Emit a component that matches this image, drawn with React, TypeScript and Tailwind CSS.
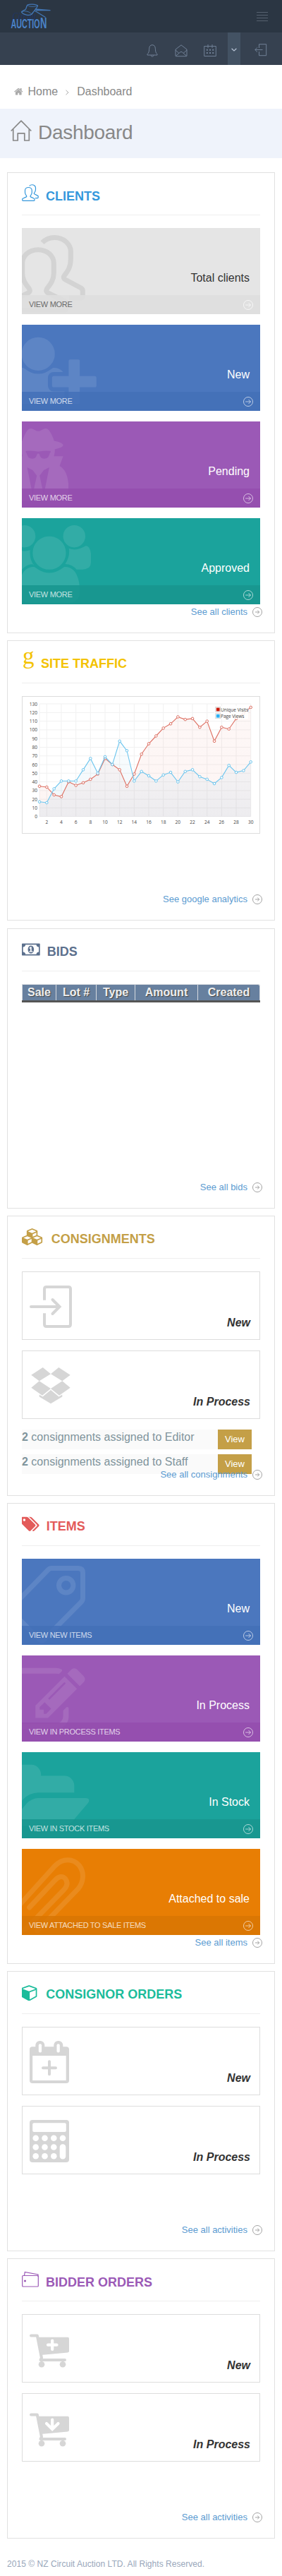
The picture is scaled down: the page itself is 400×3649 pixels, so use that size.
import type { ReactNode } from "react";

const P = {
  tags: "M384 448q0-53-37.5-90.5t-90.5-37.5-90.5 37.5-37.5 90.5 37.5 90.5 90.5 37.5 90.5-37.5 37.5-90.5zm1067 576q0 53-37 90l-491 492q-39 37-91 37-53 0-90-37l-715-716q-38-37-64.5-101t-26.5-117v-416q0-52 38-90t90-38h416q53 0 117 26.5t102 64.5l715 714q37 39 37 91zm384 0q0 53-37 90l-491 492q-39 37-91 37-36 0-59-14t-53-45l470-470q37-37 37-90 0-52-37-91l-715-714q-38-38-102-64.5t-117-26.5h224q53 0 117 26.5t102 64.5l715 714q37 39 37 91z",
  cube: "M832 1663l640-349v-636l-640 233v752zm-64-865l698-254-698-254-698 254zm832-252v768q0 35-18 65t-49 47l-704 384q-28 16-61 16t-61-16l-704-384q-31-17-49-47t-18-65v-768q0-40 23-73t61-47l704-256q22-8 44-8t44 8l704 256q38 14 61 47t23 73z",
  cubes: "M640 1632l384-192v-314l-384 164v342zm-64-454l404-173-404-173-404 173zm1088 454l384-192v-314l-384 164v342zm-64-454l404-173-404-173-404 173zm-448-293l384-165v-266l-384 164v267zm-64-379l441-189-441-189-441 189zm1088 518v416q0 36-19 67t-52 47l-448 224q-25 14-57 14t-57-14l-448-224q-4-2-7-4-2 2-7 4l-448 224q-25 14-57 14t-57-14l-448-224q-33-16-52-47t-19-67v-416q0-38 21.5-70t56.5-48l434-186v-400q0-38 21.5-70t56.5-48l448-192q23-10 50-10t50 10l448 192q35 16 56.5 48t21.5 70v400l434 186q36 16 57 48t21 70z",
  money: "M768 1152h384v-96h-128v-448h-114l-148 137 77 80q42-37 55-57h2v288h-128v96zm512-256q0 70-21 142t-59.5 134-101.5 101-138 39-138-39-101.5-101-59.5-134-21-142 21-142 59.5-134 101.5-101 138-39 138 39 101.5 101 59.5 134 21 142zm512 256v-512q-106 0-181-75t-75-181h-1152q0 106-75 181t-181 75v512q106 0 181 75t75 181h1152q0-106 75-181t181-75zm128-832v1152q0 26-19 45t-45 19h-1792q-26 0-45-19t-19-45v-1152q0-26 19-45t45-19h1792q26 0 45 19t19 45z",
  home: "M1408 992v480q0 26-19 45t-45 19h-384v-384h-256v384h-384q-26 0-45-19t-19-45v-480q0-1 .5-3t.5-3l575-474 575 474q1 2 1 6zm223-69l-62 74q-8 9-21 11h-3q-13 0-21-7l-692-577-692 577q-12 8-24 7-13-2-21-11l-62-74q-8-10-7-23.5t11-21.5l719-599q32-26 76-26t76 26l244 204v-195q0-14 9-23t23-9h192q14 0 23 9t9 23v408l219 182q10 8 11 21.5t-7 23.5z",
  userPlus: "M704 896q-159 0-271.5-112.5t-112.5-271.5 112.5-271.5 271.5-112.5 271.5 112.5 112.5 271.5-112.5 271.5-271.5 112.5zm960 128h352q13 0 22.5 9.5t9.5 22.5v192q0 13-9.5 22.5t-22.5 9.5h-352v352q0 13-9.5 22.5t-22.5 9.5h-192q-13 0-22.5-9.5t-9.5-22.5v-352h-352q-13 0-22.5-9.5t-9.5-22.5v-192q0-13 9.5-22.5t22.5-9.5h352v-352q0-13 9.5-22.5t22.5-9.5h192q13 0 22.5 9.5t9.5 22.5v352zm-736 224q0 52 38 90t90 38h256v238q-68 50-171 50h-874q-121 0-194-69t-73-190q0-53 3.5-103.5t14-109 26.5-108.5 43-97.5 62-81 85.5-53.5 111.5-20q19 0 39 17 79 61 154.5 91.5t164.5 30.5 164.5-30.5 154.5-91.5q20-17 39-17 132 0 217 96h-223q-52 0-90 38t-38 90v192z",
  group: "M593 896q-162 5-265 128h-134q-82 0-138-40.5t-56-118.5q0-353 124-353 6 0 43.5 21t97.5 42.5 119 21.5q67 0 133-23-5 37-5 66 0 159 93 293zm1071 637q0 120-73 189.5t-194 69.5h-874q-121 0-194-69.5t-73-189.5q0-53 3.5-103.5t14-109 26.5-108.5 43-97.5 62-81 85.5-53.5 111.5-20q10 0 43 21.5t73 48 107 48 135 21.5 135-21.5 107-48 73-48 43-21.5q61 0 111.5 20t85.5 53.5 62 81 43 97.5 26.5 108.5 14 109 3.5 103.5zm-1024-1277q0 106-75 181t-181 75-181-75-75-181 75-181 181-75 181 75 75 181zm704 384q0 159-112.5 271.5t-271.5 112.5-271.5-112.5-112.5-271.5 112.5-271.5 271.5-112.5 271.5 112.5 112.5 271.5zm576 225q0 78-56 118.5t-138 40.5h-134q-103-123-265-128 93-134 93-293 0-29-5-66 66 23 133 23 59 0 119-21.5t97.5-42.5 43.5-21q124 0 124 353zm-128-609q0 106-75 181t-181 75-181-75-75-181 75-181 181-75 181 75 75 181z",
  folder: "M1879 952q0 31-31 66l-336 396q-43 51-120.5 86.5t-143.5 35.5h-1088q-34 0-60.5-13t-26.5-43q0-31 31-66l336-396q43-51 120.5-86.5t143.5-35.5h1088q34 0 60.5 13t26.5 43zm-343-344v160h-832q-94 0-197 47.5t-164 119.5l-337 396-5 6q0-4-.5-12.5t-.5-12.5v-960q0-92 66-158t158-66h320q92 0 158 66t66 158v32h544q92 0 158 66t66 158z",
  edit: "M888 1184l116-116-152-152-116 116v56h96v96h56zm440-720q-16-16-33 1l-350 350q-17 17-1 33t33-1l350-350q17-17 1-33zm80 594v190q0 119-84.5 203.5t-203.5 84.5h-832q-119 0-203.5-84.5t-84.5-203.5v-832q0-119 84.5-203.5t203.5-84.5h832q63 0 117 25 15 7 18 23 3 17-9 29l-49 49q-14 14-32 8-23-6-45-6h-832q-66 0-113 47t-47 113v832q0 66 47 113t113 47h832q66 0 113-47t47-113v-126q0-13 9-22l64-64q15-15 35-7t20 29zm-96-738l288 288-672 672h-288v-288zm444 132l-92 92-288-288 92-92q28-28 68-28t68 28l152 152q28 28 28 68t-28 68z",
  secret: "M576 1536l96-448-96-128-128-64zm256 0l128-640-128 64-96 128zm160-1010q-2-4-4-6-10-8-96-8-70 0-167 19-7 2-21 2t-21-2q-97-19-167-19-86 0-96 8-2 2-4 6 2 18 4 27 2 3 7.5 6.5t7.5 10.5q2 4 7.5 20.5t7 20.5 7.5 17 8.5 17 9 14 12 13.5 14 9.5 17.5 8 20.5 4 24.5 2q36 0 59-12.5t32.5-30 14.5-34.5 11.5-29.5 17.5-12.5h12q11 0 17.5 12.5t11.5 29.5 14.5 34.5 32.5 30 59 12.5q13 0 24.5-2t20.5-4 17.5-8 14-9.5 12-13.5 9-14 8.5-17 7.5-17 7-20.5 7.5-20.5q2-7 7.5-10.5t7.5-6.5q2-9 4-27zm416 879q0 121-73 190t-194 69h-874q-121 0-194-69t-73-190q0-61 4.5-118t19-125.5 37.5-123.5 63.5-103.5 93.5-74.5l-90-220h214q-22-64-22-128 0-12 2-32-194-40-194-96 0-57 210-99 17-62 51.5-134t70.5-114q32-37 76-37 30 0 84 31t84 31 84-31 84-31q44 0 76 37 36 42 70.5 114t51.5 134q210 42 210 99 0 56-194 96 7 81-20 160h214l-82 225q63 33 107.5 96.5t65.5 143.5 29 151.5 8 148.5z",
};

/* Solid glyph on a 1792-unit em square */
function Glyph({ d, w, size }: { d: string; w: number; size: number }) {
  return (
    <svg width={(w / 1792) * size} height={size} viewBox={`0 0 ${w} 1792`} fill="currentColor" className="block shrink-0">
      <path d={d} />
    </svg>
  );
}

function UsersIcon({ size, sw = 7 }: { size: number; sw?: number }) {
  return (
    <svg width={size} height={size} viewBox="0 0 110 110" fill="none" stroke="currentColor" strokeWidth={sw} className="block shrink-0">
      <path d="M43 20.7C56 20.7 65.3 29.5 65.3 40V54C65.3 64 60 70 55.5 76Q53.5 79.5 57 82L80 93Q82.5 94.5 82.5 97V103Q82.5 107 79 107H7Q3.5 107 3.5 103V97Q3.5 94.5 6 93L29 82Q32.5 79.5 30.5 76C26 70 20.7 64 20.7 54V40C20.7 29.5 30 20.7 43 20.7Z" />
      <path d="M49 10.7C53.5 6 59 3.5 66.3 3.5C79 3.5 89.3 12.5 89.3 23V34C89.3 46 84.5 52 80.5 57Q77.5 60.5 81.5 63L104 75Q106.3 76.5 106.3 79V85Q106.3 89.5 102 89.5H87" />
    </svg>
  );
}

function TagIcon() {
  return (
    <svg width="110" height="110" viewBox="0 0 110 110" fill="none" stroke="currentColor" strokeWidth="7">
      <path d="M62 3.5H100Q106.5 3.5 106.5 10V46Q106.5 49 104 51.5L51 105Q48.3 107.500 45.500 105L5 64.500Q2.500 62 5 59.500L57 6Q59 3.500 62 3.500Z" />
      <circle cx="82.700" cy="27.700" r="10.200" />
    </svg>
  );
}

function ClipIcon() {
  return (
    <svg width="110" height="110" viewBox="0 0 110 110" fill="none" stroke="currentColor" strokeWidth="7" strokeLinecap="round">
      <path d="M30.700 73L67 34.500C72 28.500 78 28 81.500 32C85.500 37 84.500 42.500 80 47.500L27 102C18 110 4 106 3.500 92Q3.500 84 9 78L67 14C78 2.500 93 3.500 101 13C109 23 108 37 99.500 47L42 106" />
    </svg>
  );
}

function ArrowCircle() {
  return (
    <svg width="14" height="14" viewBox="0 0 14 14" fill="none" stroke="currentColor" className="block shrink-0">
      <circle cx="7" cy="7" r="6.500" strokeWidth=".9" />
      <path d="M3.200 7H10.500M7.500 4L10.500 7L7.500 10" strokeWidth=".9" />
    </svg>
  );
}

function LinkCircle() {
  return (
    <svg width="14" height="14" viewBox="0 0 14 14" fill="none" stroke="#999" className="block shrink-0">
      <circle cx="7" cy="7" r="6.500" strokeWidth=".9" />
      <path d="M4 7H9.700M7.200 4.500L9.700 7L7.200 9.500" strokeWidth=".9" />
    </svg>
  );
}

function Panel({ icon, title, color, titleCls, link, tall, last, children }: {
  icon: ReactNode; title: string; color: string; titleCls: string; link: string; tall?: boolean; last?: string; children: ReactNode;
}) {
  return (
    <section className={`relative border border-[#e1e1e1] bg-white px-5 ${tall ? "h-[653px]" : "h-[397px]"} ${last ?? "mb-[10px]"}`}>
      <header className={`flex h-[60px] items-start border-b border-[#eee] ${color}`}>
        {icon}
        <h2 className={`text-[18px] leading-5 font-bold whitespace-nowrap ${titleCls}`}>{title}</h2>
      </header>
      <div className="pt-[18px]">{children}</div>
      <a className="absolute right-[17px] bottom-[21px] flex items-center gap-[7px] text-[13px] leading-4 text-[#5b9bd1]">
        {link}
        <LinkCircle />
      </a>
    </section>
  );
}

function Tile({ bg, strip, label, more, icon, light }: {
  bg: string; strip: string; label: string; more: string; icon: ReactNode; light?: boolean;
}) {
  return (
    <div className={`relative flex h-[122px] flex-col overflow-hidden ${bg}`}>
      <div className={`absolute top-[9.600px] left-[-20px] ${light ? "text-black/8" : "text-white/10"}`}>{icon}</div>
      <div className={`relative h-[95px] pt-[62px] pr-[15px] text-right text-[16px] leading-[18px] ${light ? "text-[#333]" : "text-white"}`}>{label}</div>
      <div className={`relative flex h-[27px] items-center justify-between px-[10px] text-[11px] tracking-[-0.300px] ${strip} ${light ? "text-[#6a6a6a]" : "text-white/75"}`}>
        <span className="leading-[14px] pb-px">{more}</span>
        <span className={light ? "text-white/80" : "text-white/70"}><ArrowCircle /></span>
      </div>
    </div>
  );
}

function Card({ icon, label }: { icon: ReactNode; label: string }) {
  return (
    <div className="flex h-[97px] justify-between border border-[#ddd] pl-[10px] pr-[13px]">
      <svg width="60" height="60" viewBox="0 0 60 60" className="mt-[18.700px] text-[#d6d6d6]">{icon}</svg>
      <div className="pt-[63px] text-[16px] leading-[18px] font-bold italic text-[#333]">{label}</div>
    </div>
  );
}

const loginIcon = (
  <g fill="none" stroke="currentColor" strokeWidth="4" >
    <path d="M21 20.700V5Q21 2 24 2H55Q58 2 58 5V55Q58 58 55 58H24Q21 58 21 55V39.300" />
    <path d="M2 30H42M32.500 20L42.500 30L32.500 40" strokeLinecap="round" />
  </g>
);
const dropIcon = (
  <g fill="currentColor">
    <path d="M2.300 14.700L18.700 4L30 13.300L13.700 23.300ZM57.700 14.700L41.300 4L30 13.300L46.300 23.300ZM13.700 23.300L30 34L18 43.700L2.300 32.700ZM46.300 23.300L30 34L42 43.700L57.700 32.700Z" />
    <path d="M30 36L41.500 45.500L46.300 42.500V45.600L30 55.300L13.700 45.600V42.500L18.500 45.500Z" />
  </g>
);
const calPlusIcon = (
  <g>
    <rect y="8.300" width="56" height="51.700" rx="4" fill="currentColor" />
    <rect x="4.200" y="21" width="47.500" height="35" fill="#fff" />
    <rect x="8.300" width="13" height="19" rx="6" fill="currentColor" />
    <rect x="34.300" width="13" height="19" rx="6" fill="currentColor" />
    <rect x="12.800" y="4.300" width="4.300" height="12.300" rx="2" fill="#fff" />
    <rect x="38.500" y="4.300" width="4.300" height="12.300" rx="2" fill="#fff" />
    <path d="M19 38.300H37M28 29.300V47.300" stroke="currentColor" strokeWidth="4" strokeLinecap="round" />
  </g>
);
const calcIcon = (
  <g fill="#fff">
    <rect width="56" height="60" rx="4" fill="#d6d6d6" />
    <rect x="4.200" y="4.300" width="47.600" height="12.700" rx="2" />
    {[25.700, 38.500, 51.300].map((y) => [8.700, 21.500, 34.300].map((x) => <circle key={`${x}-${y}`} cx={x} cy={y} r="4.300" />))}
    <circle cx="47" cy="25.700" r="4.300" />
    <rect x="42.700" y="34.200" width="8.600" height="21.400" rx="4.200" />
  </g>
);
const cartBase = (
  <>
    <path d="M2 10.500H10.800L17 42L15.500 45H50" fill="none" stroke="currentColor" strokeWidth="4" strokeLinecap="round" strokeLinejoin="round" />
    <path d="M10 12.700H54Q56 12.700 56 15V32.500Q56 34 54 34.500L16 38Z" fill="currentColor" />
    <circle cx="17" cy="51.300" r="4.300" fill="currentColor" />
    <circle cx="47" cy="51.300" r="4.300" fill="currentColor" />
  </>
);
const cartPlusIcon = (
  <g>
    {cartBase}
    <path d="M26 23.700H38.500M32.200 17.500V30" stroke="#fff" strokeWidth="4.200" strokeLinecap="round" />
  </g>
);
const cartDownIcon = (
  <g>
    {cartBase}
    <path d="M32.200 17.500V31M24 23L32.200 31L40.500 23" fill="none" stroke="#fff" strokeWidth="4.200" strokeLinecap="round" />
  </g>
);

const red = [35, 34, 25, 23, 40, 36, 39, 43, 49, 67, 60, 54, 35, 49, 72, 84, 93, 102, 107, 115, 112, 113, 103, 110, 87, 103, 101, 113, 119, 126];
const blue = [17, 16, 32, 41, 41, 41, 54, 67, 50, 69, 60, 87, 76, 41, 52, 47, 41, 48, 51, 40, 52, 54, 46, 43, 38, 45, 59, 51, 53, 63];
const px = (i: number) => 25 + i * 10.335;
const py = (v: number) => 170.700 - v * 1.2282;

function Chart() {
  const line = (d: number[]) => d.map((v, i) => `${px(i).toFixed(1)},${py(v).toFixed(1)}`).join(" ");
  const area = (d: number[]) => `25,170.700 ${line(d)} 324.700,170.700`;
  const series = (d: number[], c: string) => (
    <g>
      <polyline points={line(d)} fill="none" stroke={c} strokeWidth="1.100" />
      {d.map((v, i) => <circle key={i} cx={px(i)} cy={py(v)} r="1.800" fill="#fff" stroke={c} strokeWidth="1" />)}
    </g>
  );
  return (
    <div className="h-[195px] border border-[#ddd]">
      <svg width="338" height="195" viewBox="0 0 338 195" className="-mt-px -ml-px block max-w-none font-['Open_Sans',sans-serif]" fontSize="6.600" fill="#444">
        <defs>
          <linearGradient id="redFill" x1="0" y1="0" x2="0" y2="1">
            <stop offset="0" stopColor="#e26a5a" stopOpacity=".05" />
            <stop offset="1" stopColor="#e26a5a" stopOpacity=".07" />
          </linearGradient>
          <linearGradient id="blueFill" x1="0" y1="0" x2="0" y2="1">
            <stop offset="0" stopColor="#5cb8e6" stopOpacity=".03" />
            <stop offset="1" stopColor="#5c9ec6" stopOpacity=".1" />
          </linearGradient>
        </defs>
        <g stroke="#f1f1f1" strokeWidth="1">
          {Array.from({ length: 14 }, (_, i) => <path key={i} d={`M25 ${py(i * 10)}H324.700`} />)}
          {Array.from({ length: 15 }, (_, i) => <path key={i} d={`M${px(i * 2 + 1)} 11V170.700`} />)}
          <path d="M25 11V170.700" />
        </g>
        <polygon points={area(red)} fill="url(#redFill)" />
        <polygon points={area(blue)} fill="url(#blueFill)" />
        {series(red, "#dd6f62")}
        {series(blue, "#6cc5ee")}
        {Array.from({ length: 14 }, (_, i) => <text key={i} x="22" y={py(i * 10) + 2.500} textAnchor="end">{i * 10}</text>)}
        {Array.from({ length: 15 }, (_, i) => <text key={i} x={px(i * 2 + 1)} y="180.500" textAnchor="middle">{i * 2 + 2}</text>)}
        <rect x="273" y="14" width="48" height="18.500" fill="#fff" fillOpacity=".85" />
        <rect x="274.700" y="15.500" width="7" height="7" fill="#fff" stroke="#ccc" strokeWidth=".7" />
        <rect x="275.800" y="16.600" width="4.800" height="4.800" fill="#cb1b0c" />
        <rect x="274.700" y="24.700" width="7" height="7" fill="#fff" stroke="#ccc" strokeWidth=".7" />
        <rect x="275.800" y="25.800" width="4.800" height="4.800" fill="#2cb0f2" />
        <text x="282" y="21.700" textLength="39.300">Unique Visits</text>
        <text x="282" y="30.900" textLength="33.500">Page Views</text>
      </svg>
    </div>
  );
}

function Logo() {
  return (
    <svg width="60" height="41" viewBox="0 0 60 41" className="block overflow-visible" fontFamily="Liberation Sans Narrow, Liberation Sans, sans-serif">
      <text x="2.500" y="22.500" fontFamily="Liberation Serif, serif" fontStyle="italic" fontSize="14" fill="#1f3566" textLength="34" lengthAdjust="spacingAndGlyphs">Circuit</text>
      <g fill="none" stroke="#4377b5" strokeWidth="1.300" strokeLinejoin="round">
        <path d="M24 2C27 .5 36 1 38.500 3C38 6 35 7.500 34.500 9.500C32 12 31 14 29.500 15.500C26 17.500 17 15.500 15.500 12C17 10 20 9.500 21.500 8C22.500 6 22.500 4 24 2Z" />
        <path d="M16 12C19 9.500 27 11 29.500 15M24 2C26 5 34 5 38.500 3" strokeWidth=".9" />
        <path d="M35 8L56 9.700L36 9.500M34 10L49.500 19.500" />
      </g>
      <text x="0.500" y="35" fontWeight="bold" fontSize="17.500" fill="#4a82c8" textLength="41" lengthAdjust="spacingAndGlyphs">AUCTIO</text>
      <text x="42" y="35" fontWeight="bold" fontSize="22" fill="#4a82c8" textLength="9.500" lengthAdjust="spacingAndGlyphs">N</text>
    </svg>
  );
}

function Row({ name }: { name: string }) {
  return (
    <div className="mb-[7px] flex h-7 w-[326px] justify-between bg-[#fafafa] text-[16px] leading-[18px] text-[#7f949c]">
      <span className="pt-[2px]"><b>2</b> consignments assigned to {name}</span>
      <span className="flex h-7 w-12 items-center justify-center bg-[#c49f47] pb-px text-[13px] text-white">View</span>
    </div>
  );
}

export default function App() {
  const fa = "mt-[17px]";
  return (
    <div className="h-[3649px] w-[400px] overflow-hidden bg-white font-['Liberation_Sans',Arial,sans-serif]">
      <div className="flex h-[46px] items-start justify-between bg-[#2b3643] pr-5 pl-[15px]">
        <div className="pt-[5px]"><Logo /></div>
        <div className="flex w-4 flex-col gap-[3px] pt-[17px]">
          <i className="h-px bg-[#56616f]" /><i className="h-px bg-[#56616f]" /><i className="h-px bg-[#56616f]" /><i className="h-px bg-[#56616f]" />
        </div>
      </div>
      <div className="flex h-[46px] justify-end bg-[#364150] pr-[21px] text-[#708096]">
        <svg width="18" height="18" viewBox="0 0 18 18" fill="none" stroke="currentColor" className="mt-[17px] mr-[23px]">
          <path d="M9 .7C5.800 .7 4.700 3 4.600 6.500C4.500 10.500 3.800 12 2 13.800V15H16V13.800C14.200 12 13.500 10.500 13.400 6.500C13.300 3 12.200 .7 9 .7ZM7 15.200C7 17.600 11 17.600 11 15.200" />
        </svg>
        <svg width="18" height="18" viewBox="0 0 18 18" fill="none" stroke="currentColor" className="mt-[17px] mr-[23px]">
          <path d="M1 7L9 .8L17 7V16Q17 16.700 16.300 16.700H1.700Q1 16.700 1 16ZM1 8L6 12.500M17 8L12 12.500M1.300 16.300L7.500 11Q9 9.500 10.500 11L16.700 16.300" />
        </svg>
        <svg width="18" height="18" viewBox="0 0 18 18" className="mt-[17px] mr-[16px]">
          <path d="M.7 2.500H17.300V16.500H.7ZM6 0V5M12 0V5" fill="none" stroke="currentColor" />
          {[3.800, 8, 12.200].map((x) => [6.700, 11].map((y) => <rect key={`${x}${y}`} x={x} y={y} width="2" height="2" fill="currentColor" />))}
        </svg>
        <div className="flex w-[18px] items-center justify-center bg-[#435263] text-[#b9c4d6]">
          <svg width="8" height="5" viewBox="0 0 8 5" fill="none" stroke="currentColor" strokeWidth="1.200" className="mt-[3px]"><path d="M.6 .7L4 4L7.400 .7" /></svg>
        </div>
        <svg width="18" height="18" viewBox="0 0 18 18" fill="none" stroke="currentColor" className="mt-[16px] ml-[20px]">
          <path d="M6.500 6V.7H16.700V16.700H6.500V11M.8 8.500H11.500M4 5.300L.8 8.500L4 11.700" />
        </svg>
      </div>

      <nav className="flex h-[62px] items-start pl-[20px] text-[16px] leading-[18px] text-[#888]">
        <span className="mt-[31px] text-[#aaa]"><Glyph d={P.home} w={1664} size={13.500} /></span>
        <span className="mt-[29px] ml-[7px]">Home</span>
        <svg width="5" height="8" viewBox="0 0 5 8" fill="none" stroke="#aaa" className="mt-[35px] ml-[11px]"><path d="M.5 .8L4 4L.5 7.200" /></svg>
        <span className="mt-[29px] ml-[11px]">Dashboard</span>
      </nav>
      <div className="flex h-[70px] items-start bg-[#eff3fb] pl-[15px] text-[#888]">
        <svg width="30" height="30" viewBox="0 0 30 30" fill="none" stroke="currentColor" strokeWidth="1.700" className="mt-4">
          <path d="M.7 15.500L15 1.200L29.300 15.500M3.700 13V29H10.200V18.800H19.800V29H26.300V13" strokeLinejoin="round" />
        </svg>
        <h1 className="mt-[18px] ml-[9px] text-[28px] leading-8 tracking-[-0.300px]">Dashboard</h1>
      </div>

      <main className="px-[10px] pt-5">
        <Panel tall title="CLIENTS" color="text-[#3598dc]" titleCls="mt-[23px] ml-[10px]" link="See all clients" icon={<div className="mt-4"><UsersIcon size={24} sw={5.500} /></div>}>
          <div className="flex flex-col gap-[15px]">
            <Tile light bg="bg-[#e5e5e5]" strip="bg-[#dedede]/85" label="Total clients" more="VIEW MORE" icon={<UsersIcon size={110} />} />
            <Tile bg="bg-[#4b77be]" strip="bg-[#4370b7]/85" label="New" more="VIEW MORE" icon={<Glyph d={P.userPlus} w={2048} size={110} />} />
            <Tile bg="bg-[#9b59b6]" strip="bg-[#944dae]/85" label="Pending" more="VIEW MORE" icon={<Glyph d={P.secret} w={1408} size={110} />} />
            <Tile bg="bg-[#1ba39c]" strip="bg-[#18958e]/85" label="Approved" more="VIEW MORE" icon={<Glyph d={P.group} w={1920} size={110} />} />
          </div>
        </Panel>

        <Panel title="SITE TRAFFIC" color="text-[#f3c200]" titleCls="mt-[22px] ml-[9px]" link="See google analytics" last="mb-[11px]"
          icon={<span className="mt-[6px] ml-[1px] w-[17px] font-['Liberation_Serif',serif] text-[33px] leading-[30px]">g</span>}>
          <Chart />
        </Panel>

        <Panel title="BIDS" color="text-[#5c708d]" titleCls="mt-[22px] ml-[10px]" link="See all bids" icon={<div className={fa}><Glyph d={P.money} w={1920} size={24} /></div>}>
          <div className="flex h-[26px] border-b-[3px] border-[#555] text-center text-[16px] leading-[21px] font-bold text-[#eee] [text-shadow:1px_1px_1px_#444]">
            <div className="w-[49px] border-x border-t border-[#d5d9de] bg-[#67809f]">Sale</div>
            <div className="w-[57px] border-t border-r border-[#d5d9de] bg-[#67809f]">Lot #</div>
            <div className="w-[55px] border-t border-r border-[#d5d9de] bg-[#67809f]">Type</div>
            <div className="w-[89px] border-t border-r border-[#d5d9de] bg-[#67809f]">Amount</div>
            <div className="w-[88px] rounded-tr-[3px] border-t border-r border-[#d5d9de] bg-[#67809f]">Created</div>
          </div>
        </Panel>

        <Panel title="CONSIGNMENTS" color="text-[#c49f47]" titleCls="mt-[22px] ml-[11px]" link="See all consignments" icon={<div className={fa}><Glyph d={P.cubes} w={2304} size={24} /></div>}>
          <div className="flex flex-col gap-[15px]">
            <Card icon={loginIcon} label="New" />
            <Card icon={dropIcon} label="In Process" />
            <div><Row name="Editor" /><Row name="Staff" /></div>
          </div>
        </Panel>

        <Panel tall title="ITEMS" color="text-[#e35b5a]" titleCls="mt-[22px] ml-[9px]" link="See all items" icon={<div className={fa}><Glyph d={P.tags} w={1920} size={24} /></div>}>
          <div className="flex flex-col gap-[15px]">
            <Tile bg="bg-[#4b77be]" strip="bg-[#4370b7]/85" label="New" more="VIEW NEW ITEMS" icon={<TagIcon />} />
            <Tile bg="bg-[#9b59b6]" strip="bg-[#944dae]/85" label="In Process" more="VIEW IN PROCESS ITEMS" icon={<Glyph d={P.edit} w={1792} size={110} />} />
            <Tile bg="bg-[#1ba39c]" strip="bg-[#18958e]/85" label="In Stock" more="VIEW IN STOCK ITEMS" icon={<Glyph d={P.folder} w={1920} size={110} />} />
            <Tile bg="bg-[#e87e04]" strip="bg-[#d87503]/85" label="Attached to sale" more="VIEW ATTACHED TO SALE ITEMS" icon={<ClipIcon />} />
          </div>
        </Panel>

        <Panel title="CONSIGNOR ORDERS" color="text-[#1bbc9b]" titleCls="mt-[22px] ml-[12px]" link="See all activities" icon={<div className={fa}><Glyph d={P.cube} w={1664} size={24} /></div>}>
          <div className="flex flex-col gap-[15px]">
            <Card icon={calPlusIcon} label="New" />
            <Card icon={calcIcon} label="In Process" />
          </div>
        </Panel>

        <Panel title="BIDDER ORDERS" color="text-[#9b59b6]" titleCls="mt-[23px] ml-[10px]" link="See all activities"
          icon={
            <svg width="24" height="24" viewBox="0 0 24 24" fill="none" stroke="currentColor" strokeWidth="1.200" className="mt-[17px]">
              <rect x=".7" y="6.500" width="22.600" height="15.500" rx="1" />
              <path d="M3.500 6.500L4.300 1.500L23 5V8" />
              <circle cx="4.500" cy="14" r=".9" fill="currentColor" />
            </svg>
          }>
          <div className="flex flex-col gap-[15px]">
            <Card icon={cartPlusIcon} label="New" />
            <Card icon={cartDownIcon} label="In Process" />
          </div>
        </Panel>
      </main>

      <footer className="px-[10px] pt-[18px] text-[12px] leading-4 tracking-[0.040px] text-[#98a6ba]">2015 © NZ Circuit Auction LTD. All Rights Reserved.</footer>
    </div>
  );
}
